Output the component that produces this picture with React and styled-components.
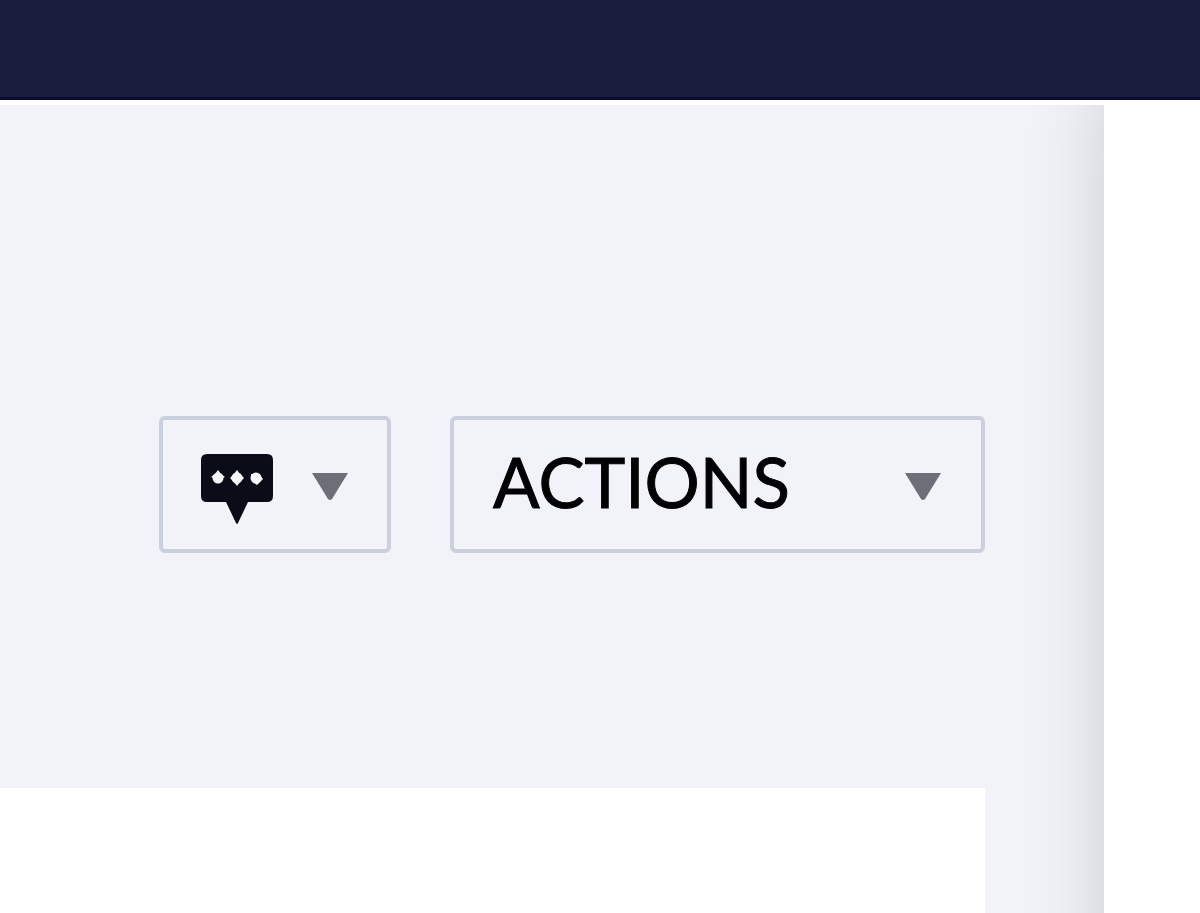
import React from "react";
import styled, { createGlobalStyle } from "styled-components";

const GlobalStyle = createGlobalStyle`
  * { box-sizing: border-box; }
  html, body, #root { height: 100%; }
  body {
    margin: 0;
    background: #fff;
    font-family: Lato, "Open Sans", sans-serif;
  }
`;

const Page = styled.div`
  display: flex;
  flex-direction: column;
  min-height: 100%;
`;

const Header = styled.header`
  flex: none;
  height: 100px;
  background: #1a1c3c;
  border-bottom: 3px solid #0b0b35;
`;

const Body = styled.div`
  flex: 1;
  display: flex;
  border-top: 5px solid #fff;
  overflow: hidden;
`;

const Main = styled.main`
  flex: 1;
  min-width: 0;
  display: flex;
  flex-direction: column;
  padding-right: 119px;
  background: #f2f3f8;
`;

const Toolbar = styled.div`
  display: flex;
  justify-content: flex-end;
  gap: 59px;
  padding: 311px 0 235px;
`;

const DropdownButton = styled.button`
  display: flex;
  align-items: center;
  justify-content: space-between;
  width: ${(p) => (p.$wide ? "535px" : "232px")};
  height: 137px;
  padding: 0 ${(p) => (p.$wide ? "39px" : "38px")};
  border: 4px solid #cbd0de;
  border-radius: 6px;
  background: #f2f3f8;
  color: #020204;
  font: inherit;
  cursor: pointer;
`;

const Label = styled.span`
  padding-bottom: 6px;
  font-size: 69px;
  line-height: 80px;
  -webkit-text-stroke: 1px currentColor;
`;

const ArrowIcon = styled.svg`
  flex: none;
  width: 38px;
  height: 28px;
  margin-top: 4px;
  fill: #6e6e79;
`;

const ChatIcon = styled.svg`
  flex: none;
  width: 72px;
  height: 70px;
  margin-top: 8px;
`;

const Content = styled.section`
  flex: 1;
  background: #fff;
`;

const SidePanel = styled.aside`
  flex: none;
  width: 96px;
  margin-bottom: -80px;
  background: #fff;
  box-shadow: 24px 0 80px 24px rgba(0, 0, 0, 0.16);
`;

function Arrow() {
  return (
    <ArrowIcon viewBox="0 0 38 28" aria-hidden="true">
      <path d="M1 0H37L21 26Q19 28 17 26Z" />
    </ArrowIcon>
  );
}

function Chat() {
  return (
    <ChatIcon viewBox="0 0 72 70" aria-hidden="true">
      <path
        fill="#0c0c19"
        d="M6 0H66Q72 0 72 6V42Q72 48 66 48H47L37 69Q36 71 35 69L25 48H6Q0 48 0 42V6Q0 0 6 0Z"
      />
      <g fill="#f7f7fa">
        <circle cx="17" cy="24" r="5.5" />
        <path d="M17 16L20 20L24 23L17 26L10 23L14 20Z" />
        <circle cx="36" cy="24" r="5.5" />
        <path d="M36 16L39 20L43 24L39 28L36 32L33 28L29 24L33 20Z" />
        <circle cx="55" cy="24" r="5.5" />
        <path d="M50 20L58 20L62 25L59 28L56 31L52 28Z" />
      </g>
    </ChatIcon>
  );
}

export default function App() {
  return (
    <>
      <GlobalStyle />
      <Page>
        <Header />
        <Body>
          <Main>
            <Toolbar>
              <DropdownButton type="button" aria-haspopup="menu" aria-label="Messages">
                <Chat />
                <Arrow />
              </DropdownButton>
              <DropdownButton type="button" aria-haspopup="menu" $wide>
                <Label>ACTIONS</Label>
                <Arrow />
              </DropdownButton>
            </Toolbar>
            <Content />
          </Main>
          <SidePanel />
        </Body>
      </Page>
    </>
  );
}
